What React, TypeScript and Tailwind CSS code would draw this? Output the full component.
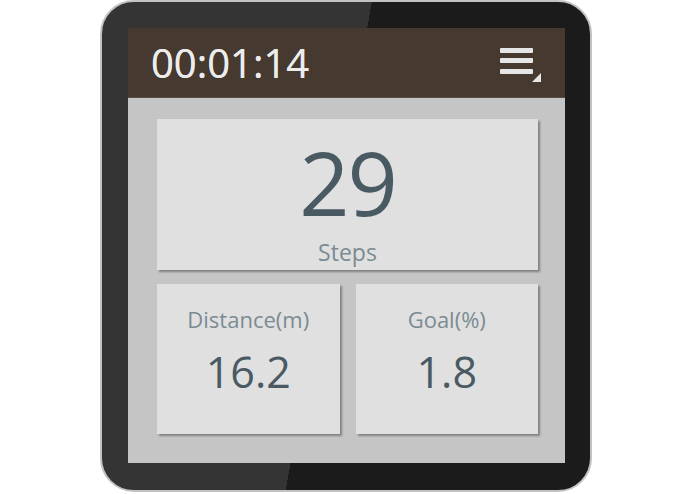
import React from "react";

// Small stat tile used in the lower row
function StatTile({ label, value }: { label: string; value: string }) {
  return (
    <div className="flex h-[150px] flex-1 flex-col items-center bg-[#e0e0e0] pt-[24px] shadow-[2px_2px_2px_rgba(0,0,0,0.35)]">
      <span className="text-[22px] leading-none text-[#7b8b92]">{label}</span>
      <span className="mt-[20px] text-[43px] leading-none text-[#4a5a63]">{value}</span>
    </div>
  );
}

function MenuIcon() {
  return (
    <svg width="42" height="35" viewBox="0 0 42 35" className="mt-[5px]">
      <rect x="0" y="0" width="33" height="5" rx="1" fill="#e6e6e6" />
      <rect x="0" y="10" width="33" height="5" rx="1" fill="#e6e6e6" />
      <rect x="0" y="21" width="33" height="5" rx="1" fill="#e6e6e6" />
      <polygon points="41,25 41,34 32,34" fill="#e6e6e6" />
    </svg>
  );
}

export default function App() {
  const elapsed = "00:01:14";
  const steps = 29;

  return (
    <div className="h-[494px] w-[695px] bg-white" style={{ fontFamily: '"Open Sans", "Noto Sans", sans-serif' }}>
      {/* Watch body */}
      <div className="ml-[100px] h-[492px] w-[492px] rounded-[34px] border-2 border-[#c2c2c2] bg-[linear-gradient(100deg,#343434_47%,#1b1b1b_47%)] px-[26px] pt-[26px]">
        {/* Screen */}
        <div className="flex h-[435px] w-[437px] flex-col bg-[#c5c5c5]">
          <header className="flex h-[70px] items-center justify-between border-b border-[#5b4f45] bg-[#463a30] pl-[23px] pr-[23px]">
            <span className="text-[40px] leading-none text-[#ececec] [text-shadow:0_0_0.6px_#ececec]">{elapsed}</span>
            <MenuIcon />
          </header>

          <main className="flex flex-col gap-[14px] pl-[29px] pr-[27px] pt-[21px]">
            <div className="flex h-[151px] flex-col items-center bg-[#e0e0e0] pt-[19px] shadow-[2px_2px_2px_rgba(0,0,0,0.35)]">
              <span className="text-[88px] leading-none tracking-[-2px] text-[#4a5a63]">{steps}</span>
              <span className="mt-[15px] text-[23px] leading-none text-[#7b8b92]">Steps</span>
            </div>
            <div className="flex gap-[16px]">
              <StatTile label="Distance(m)" value="16.2" />
              <StatTile label="Goal(%)" value="1.8" />
            </div>
          </main>
        </div>
      </div>
    </div>
  );
}
